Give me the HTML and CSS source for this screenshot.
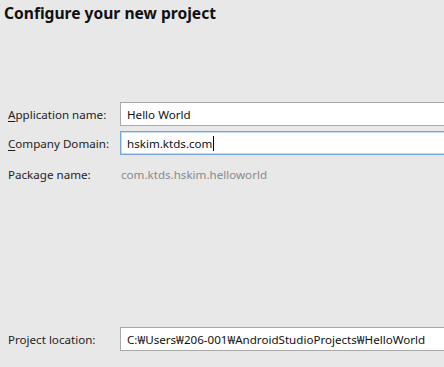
FILE: index.html
```html
<!DOCTYPE html>
<html>
<head>
  <meta charset="UTF-8">
  <title>Configure your new project</title>
  <link rel="stylesheet" href="styles.css">
</head>
<body>
  <div class="page">
    <h1>Configure your new project</h1>

    <div class="form">
      <div class="row">
        <label><u>A</u>pplication name:</label>
        <input type="text" value="Hello World">
      </div>
      <div class="row">
        <label><u>C</u>ompany Domain:</label>
        <div class="field focused">hskim.ktds.com<span class="caret"></span></div>
      </div>
      <div class="row">
        <label>Package name:</label>
        <span class="value">com.ktds.hskim.helloworld</span>
      </div>
    </div>

    <div class="form bottom">
      <div class="row">
        <label>Project location:</label>
        <input type="text" value="C:₩Users₩206-001₩AndroidStudioProjects₩HelloWorld">
      </div>
    </div>
  </div>
</body>
</html>
```

FILE: styles.css
```css
html, body {
  margin: 0;
  padding: 0;
  overflow: hidden;
}
body {
  font-family: "Noto Sans", Arial, sans-serif;
  font-size: 11.6px;
  color: #1e1e1e;
  background: #e8e8e8;
  width: 444px;
  height: 367px;
}
.page {
  padding: 0 0 0 8px;
}
h1 {
  margin: 0 0 0 -4px;
  padding-top: 3px;
  font-size: 15.6px;
  font-weight: bold;
  color: #111;
  line-height: 20px;
}
.form {
  margin-top: 79px;
  display: grid;
  gap: 5px;
}
.form.bottom {
  margin-top: 141px;
}
.row {
  display: grid;
  grid-template-columns: 112px 360px;
  align-items: center;
  height: 24px;
}
label {
  color: #1e1e1e;
}
label u {
  text-decoration: underline;
  text-underline-offset: 2px;
}
input, .field {
  box-sizing: border-box;
  height: 24px;
  font-family: inherit;
  font-size: 11.6px;
  color: #111;
  background: #fff;
  border: 1px solid #a9a9a9;
  padding: 0 6px;
  margin: 0;
  outline: none;
}
.field {
  display: flex;
  align-items: center;
  border: 1px solid #7aa6d6;
  box-shadow: inset 0 0 0 1px #c5daf0;
}
.caret {
  display: inline-block;
  width: 1px;
  height: 15px;
  background: #000;
  margin-left: 1px;
}
.value {
  color: #8a8a8a;
  padding-left: 1px;
}
.form:not(.bottom) .row:last-child {
  margin-top: 2px;
}
```
